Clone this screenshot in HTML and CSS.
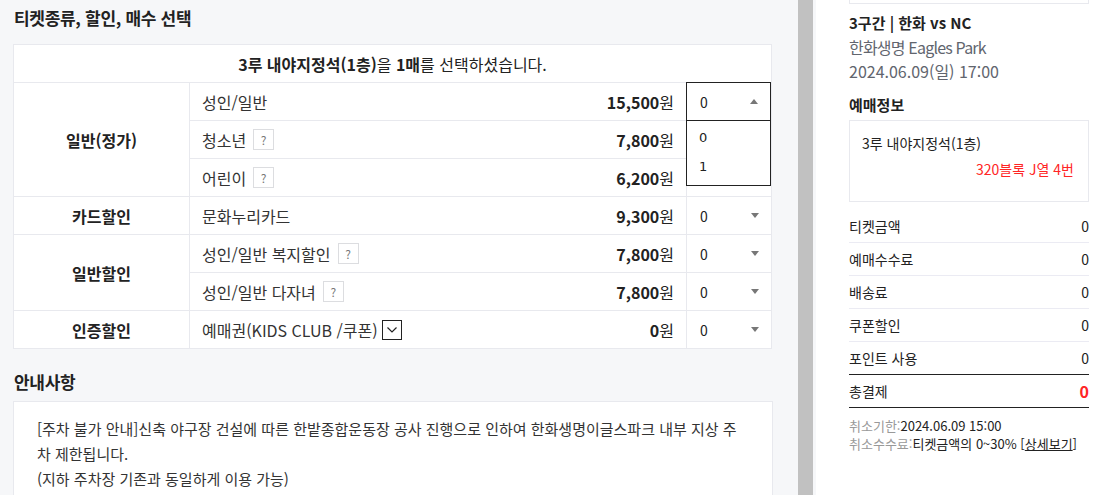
FILE: index.html
```html
<!DOCTYPE html>
<html lang="ko">
<head>
  <meta charset="UTF-8">
  <title>티켓종류 선택</title>
  <meta name="viewport" content="width=device-width, initial-scale=1">
  <link rel="stylesheet" href="styles.css">
</head>
<body>
  <div class="wrap">
    <div class="main">
      <h2 class="sec-title">티켓종류, 할인, 매수 선택</h2>
      <table class="ticket">
        <tr>
          <td colspan="3" class="head"><b>3루 내야지정석(1층)</b>을 <b>1매</b>를 선택하셨습니다.</td>
        </tr>
        <tr>
          <th rowspan="3">일반(정가)</th>
          <td class="name"><span>성인/일반</span><span class="price"><b>15,500</b>원</span></td>
          <td class="qty-cell">
            <div class="qty open">0<span class="arrow up"></span></div>
            <ul class="options">
              <li>0</li>
              <li>1</li>
            </ul>
          </td>
        </tr>
        <tr>
          <td class="name"><span>청소년 <i class="help">?</i></span><span class="price"><b>7,800</b>원</span></td>
          <td class="qty-cell"><div class="qty covered">0<span class="arrow"></span></div></td>
        </tr>
        <tr>
          <td class="name"><span>어린이 <i class="help">?</i></span><span class="price"><b>6,200</b>원</span></td>
          <td class="qty-cell"><div class="qty covered">0<span class="arrow"></span></div></td>
        </tr>
        <tr>
          <th>카드할인</th>
          <td class="name"><span>문화누리카드</span><span class="price"><b>9,300</b>원</span></td>
          <td class="qty-cell"><div class="qty">0<span class="arrow"></span></div></td>
        </tr>
        <tr>
          <th rowspan="2">일반할인</th>
          <td class="name"><span>성인/일반 복지할인 <i class="help">?</i></span><span class="price"><b>7,800</b>원</span></td>
          <td class="qty-cell"><div class="qty">0<span class="arrow"></span></div></td>
        </tr>
        <tr>
          <td class="name"><span>성인/일반 다자녀 <i class="help">?</i></span><span class="price"><b>7,800</b>원</span></td>
          <td class="qty-cell"><div class="qty">0<span class="arrow"></span></div></td>
        </tr>
        <tr>
          <th>인증할인</th>
          <td class="name">
            <span>예매권(KIDS CLUB /쿠폰)<i class="more"><svg width="12" height="8" viewBox="0 0 12 8"><path d="M1.5 1.5 6 6l4.5-4.5" fill="none" stroke="#222" stroke-width="1.2"/></svg></i></span>
            <span class="price"><b>0</b>원</span>
          </td>
          <td class="qty-cell"><div class="qty">0<span class="arrow"></span></div></td>
        </tr>
      </table>

      <h2 class="sec-title notice-title">안내사항</h2>
      <div class="notice">
        [주차 불가 안내]신축 야구장 건설에 따른 한밭종합운동장 공사 진행으로 인하여 한화생명이글스파크 내부 지상 주차 제한됩니다.<br>
        (지하 주차장 기존과 동일하게 이용 가능)
      </div>
    </div>

    <div class="scroll"><div class="thumb"></div></div>

    <div class="side">
      <div class="top-box"></div>
      <div class="game">
        <strong>3구간 | 한화 vs NC</strong>
        <p class="place">한화생명 Eagles Park</p>
        <p>2024.06.09(일) 17:00</p>
      </div>
      <h3 class="side-title">예매정보</h3>
      <div class="seat-box">
        <p>3루 내야지정석(1층)</p>
        <p class="seat">320블록 J열 4번</p>
      </div>
      <ul class="sum">
        <li><span>티켓금액</span><span>0</span></li>
        <li><span>예매수수료</span><span>0</span></li>
        <li><span>배송료</span><span>0</span></li>
        <li><span>쿠폰할인</span><span>0</span></li>
        <li class="last"><span>포인트 사용</span><span>0</span></li>
        <li class="total"><span>총결제</span><span class="red">0</span></li>
      </ul>
      <div class="cancel">
        <p><span class="label">취소기한:</span>2024.06.09 15:00</p>
        <p><span class="label">취소수수료:</span>티켓금액의 0~30% [<u>상세보기</u>]</p>
      </div>
    </div>
  </div>
</body>
</html>
```

FILE: styles.css
```css
* { box-sizing: border-box; }
body { margin: 0; font-family: "Noto Sans CJK KR", "Noto Sans", sans-serif; color: #222; background: #fff; }
p, ul, h2, h3 { margin: 0; padding: 0; }
ul { list-style: none; }

.wrap { display: flex; height: 495px; overflow: hidden; }

.main { width: 798px; background: #f6f7f9; padding: 6px 25px 0 13px; }
.sec-title { font-size: 17px; line-height: 24px; font-weight: bold; padding-left: 1px; letter-spacing: -0.3px; }

.ticket { width: 759px; margin-top: 14px; border-collapse: collapse; background: #fff; font-size: 16px; }
.ticket td, .ticket th { border: 1px solid #e8e9ee; height: 38px; padding: 0; }
.ticket .head { text-align: center; }
.ticket th { width: 176px; font-weight: bold; text-align: center; }
.ticket .name { padding: 0 12px; color: #333; }
.name > span:first-child { float: left; display: flex; align-items: center; }
.price { float: right; color: #222; }

.help { flex: none; display: inline-flex; width: 21px; height: 21px; margin-left: 7px; border: 1px solid #dcdde0; font-style: normal; font-size: 12px; color: #777; align-items: center; justify-content: center; }
.more { flex: none; display: inline-flex; width: 20px; height: 20px; margin-left: 4px; border: 1px solid #222; align-items: center; justify-content: center; }

.qty-cell { width: 85px; position: relative; }
.qty { display: flex; align-items: center; justify-content: space-between; height: 37px; padding: 0 12px 0 13px; font-size: 14px; }
.qty.covered { visibility: hidden; }
.arrow { width: 0; height: 0; border-left: 4px solid transparent; border-right: 4px solid transparent; border-top: 5px solid #777; }
.arrow.up { border-top: 0; border-bottom: 5px solid #777; }
.qty.open { position: absolute; top: -1px; left: -1px; right: 0; height: 39px; border: 1px solid #222; background: #fff; z-index: 2; }
.options { position: absolute; top: 37px; left: -1px; right: 0; z-index: 2; background: #fff; border: 1px solid #222; padding: 2px 0 4px; font-family: "DejaVu Sans", sans-serif; font-size: 13px; }
.options li { height: 29px; line-height: 29px; padding-left: 12px; }

.notice-title { margin-top: 20px; line-height: 26px; }
.notice { margin-top: 6px; background: #fff; border: 1px solid #e8e9ee; padding: 14px 26px 0 23px; height: 120px; font-size: 15px; line-height: 25px; color: #333; word-break: break-all; }

.scroll { width: 18px; background: #f6f7f9; padding-right: 3px; }
.thumb { width: 15px; height: 100%; background: #c1c1c1; }

.side { flex: 1; padding: 0 31px 0 33px; font-size: 14px; }
.top-box { height: 4px; border: 1px solid #e8e9ee; border-top: 0; }
.game { padding-top: 7px; font-size: 15px; line-height: 24px; }
.game strong { display: block; }
.game p { color: #61656e; font-size: 16px; }
.game .place { letter-spacing: -0.8px; }
.side-title { margin-top: 10px; font-size: 15px; line-height: 24px; font-weight: bold; }
.seat-box { margin-top: 3px; height: 82px; border: 1px solid #e8e9ee; padding: 9px 14px 0 12px; line-height: 26px; }
.seat { text-align: right; color: #ff2525; }

.sum { margin-top: 8px; }
.sum li { display: flex; justify-content: space-between; height: 33px; line-height: 32px; border-bottom: 1px solid #ebebf3; }
.sum li.last { border-bottom-color: #222; }
.sum li.total { border-bottom-color: #222; }
.red { color: #ff2525; font-weight: bold; font-size: 16px; }

.cancel { margin-top: 9px; font-size: 13px; line-height: 18px; }
.cancel .label { color: #999; }
```
